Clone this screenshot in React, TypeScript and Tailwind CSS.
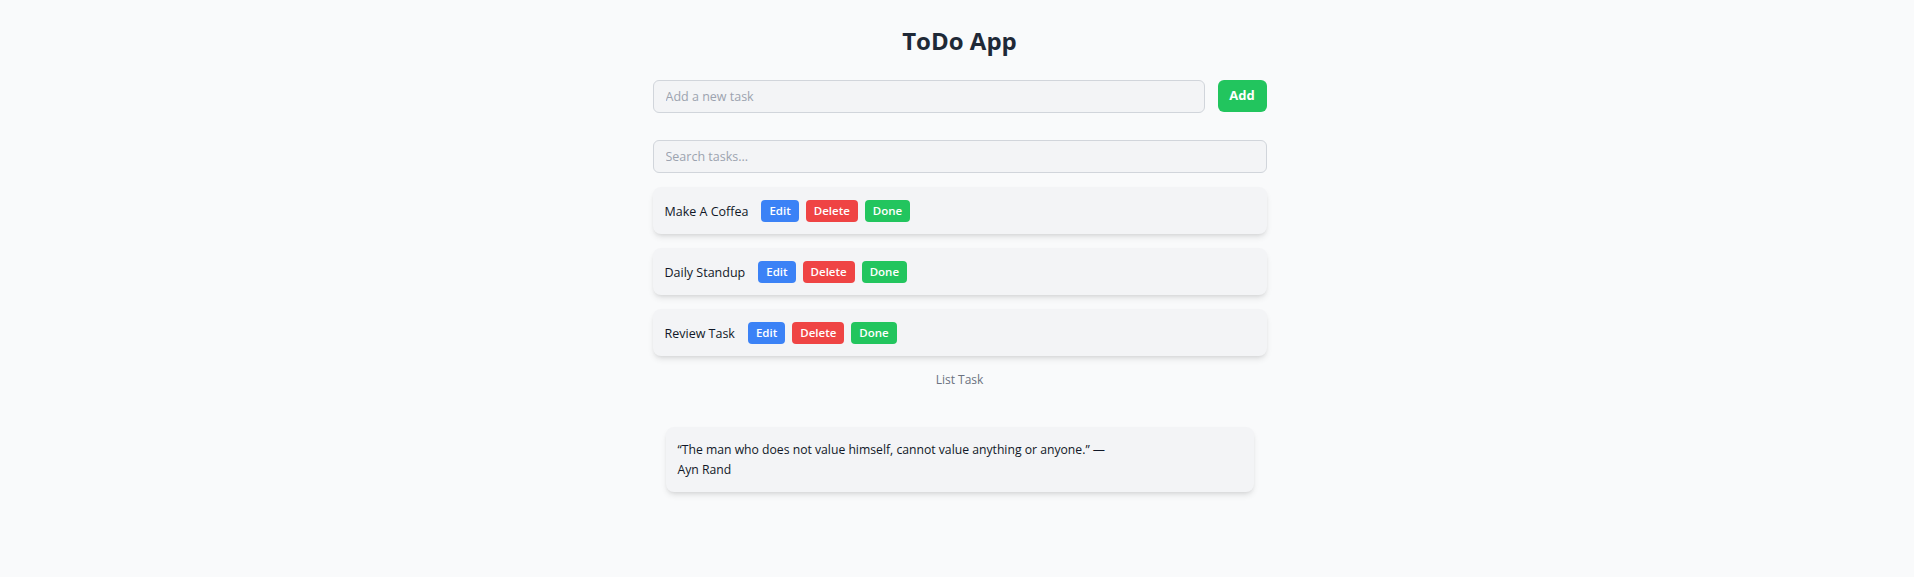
import React from "react";

const tasks = ["Make A Coffea", "Daily Standup", "Review Task"];

export default function App() {
  return (
    <div className="min-h-screen w-full bg-[#f9fafb] pl-[5px] font-['Open_Sans','Noto_Sans',sans-serif] text-[#111827]">
      <div className="w-[614px] mx-auto pt-[25px]">
        <h1 className="text-[24px] leading-8 font-bold text-center text-[#1f2937] mb-[23px]">ToDo App</h1>
        <div className="flex items-start gap-[13px] mb-[27px]">
          <input
            className="flex-1 h-[33px] px-3 text-[12.5px] bg-[#f3f4f6] border border-[#d1d5db] rounded-md placeholder:text-[#9ca3af] outline-none"
            placeholder="Add a new task"
          />
          <button className="h-8 w-[49px] bg-[#22c55e] text-white text-[13px] font-bold rounded-md">Add</button>
        </div>
        <input
          className="block w-full h-[33px] px-3 text-[12.5px] bg-[#f3f4f6] border border-[#d1d5db] rounded-md placeholder:text-[#9ca3af] outline-none mb-[14px]"
          placeholder="Search tasks..."
        />
        <div className="flex flex-col gap-[14px]">
          {tasks.map((t) => (
            <div key={t} className="h-[47px] flex items-center px-3 bg-[#f3f4f6] rounded-lg shadow-md">
              <span className="text-[12.5px] pt-[3px] mr-[13px]">{t}</span>
              <div className="flex gap-[7px]">
                <button className="h-[22px] px-2 text-[11.5px] font-semibold text-white bg-[#3b82f6] rounded">Edit</button>
                <button className="h-[22px] px-2 text-[11.5px] font-semibold text-white bg-[#ef4444] rounded">Delete</button>
                <button className="h-[22px] px-2 text-[11.5px] font-semibold text-white bg-[#22c55e] rounded">Done</button>
              </div>
            </div>
          ))}
        </div>
        <p className="mt-[14px] text-[12px] leading-5 text-center text-[#6b7280]">List Task</p>
        <div className="mt-[37px] mx-[13px] px-3 pt-[13px] pb-3 bg-[#f3f4f6] rounded-lg shadow-md text-[12.2px] leading-5 text-[#111827]">
          <div>“The man who does not value himself, cannot value anything or anyone.” —</div>
          <div>Ayn Rand</div>
        </div>
      </div>
    </div>
  );
}
